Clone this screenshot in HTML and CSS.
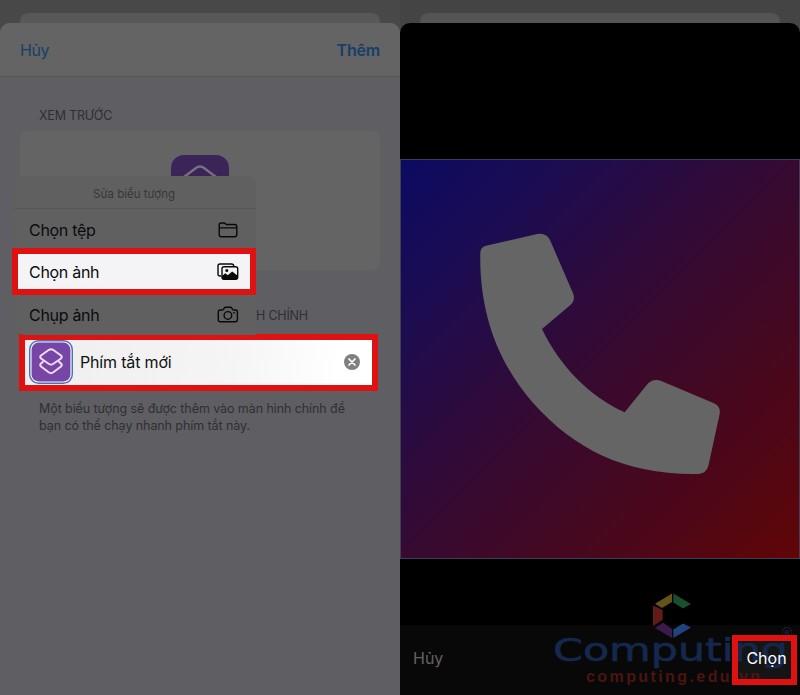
FILE: index.html
```html
<!DOCTYPE html>
<html lang="vi">
<head>
<meta charset="utf-8">
<title>Phím tắt mới</title>
<link rel="stylesheet" href="styles.css">
</head>
<body>
<main class="screens">
  <section class="phone">
    <div class="back-sheet"></div>
    <div class="sheet">
      <header class="bar"><span class="t-cancel">Hủy</span><b class="t-add">Thêm</b></header>
      <h2 class="label">XEM TRƯỚC</h2>
      <div class="preview">
        <svg class="app-icon" width="58" height="58" viewBox="0 0 58 58"><rect width="58" height="58" rx="13" fill="#3a2458"/><path d="M13 22L25 13Q29 10 33 13L45 22L33 31Q29 34 25 31Z" fill="none" stroke="#77717d" stroke-width="2.4" stroke-linejoin="round"/></svg>
      </div>
      <h2 class="label label-home"><span>H CHÍNH</span></h2>
      <div class="name-row">
        <svg class="shortcut" width="44" height="44" viewBox="0 0 44 44"><rect x=".7" y=".7" width="42.6" height="42.6" rx="9" fill="#f4f4f8" stroke="#4b72b8" stroke-width="1.4"/><rect x="2.600" y="2.600" width="38.800" height="38.800" rx="7" fill="#7645a6"/><g fill="none" stroke="#efdcf5" stroke-width="2" stroke-linejoin="round"><path d="M12 15.5L20 9.8Q22 8.500 24 9.800L32 15.500Q33.500 17 32 18.500L24 24Q22 25.300 20 24L12 18.500Q10.500 17 12 15.500Z"/><path d="M14.500 21.200L12 23.500Q10.500 25 12 26.500L20 32.500Q22 33.800 24 32.500L32 26.500Q33.500 25 32 23.500L29.500 21.200"/></g></svg>
        <span class="t-name">Phím tắt mới</span>
        <svg class="clear" width="16" height="16" viewBox="0 0 16 16"><circle cx="8" cy="8" r="8" fill="#808083"/><path d="M5 5L11 11M11 5L5 11" stroke="#fff" stroke-width="1.7" stroke-linecap="round"/></svg>
      </div>
      <p class="note"><span class="n1">Một biểu tượng sẽ được thêm vào màn hình chính để</span><br><span class="n2">bạn có thể chạy nhanh phím tắt này.</span></p>
    </div>
    <div class="menu">
      <div class="menu-title"><span>Sửa biểu tượng</span></div>
      <div class="item"><span>Chọn tệp</span>
        <svg width="22" height="20" viewBox="0 0 22 20"><path d="M2.200 14.500V5Q2.200 3 4.200 3H7.500L9.300 4.500H17.500Q19.800 4.500 19.800 6.700V14.500Q19.800 16.800 17.500 16.800H4.500Q2.200 16.800 2.200 14.500ZM2.200 7.900H19.800" fill="none" stroke="#080808" stroke-width="1.400" stroke-linejoin="round"/></svg></div>
      <div class="item picked"><span>Chọn ảnh</span>
        <svg width="22" height="20" viewBox="0 0 22 20"><path d="M4.200 14H3Q1 14 1 12V4Q1 2 3 2H14.500Q16.700 2 16.700 4" fill="none" stroke="#080808" stroke-width="1.400"/><rect x="5" y="4.700" width="15.700" height="12.600" rx="2" fill="#f3f3f5" stroke="#080808" stroke-width="1.400"/><circle cx="9.800" cy="8.600" r="1.500" fill="#080808"/><path d="M5 14L8.300 11.300L10.800 13.300L15.200 9.500L20.700 13.700V16Q20.700 17.300 19 17.300H7Q5 17.300 5 15.500Z" fill="#080808"/></svg></div>
      <div class="item last"><span>Chụp ảnh</span>
        <svg width="22" height="20" viewBox="0 0 22 20"><path d="M3 5H5.300Q6.200 5 6.700 4L7.300 3Q7.800 2.300 8.700 2.300H13.300Q14.200 2.300 14.700 3L15.300 4Q15.800 5 16.700 5H18.500Q20.400 5 20.400 7V14.500Q20.400 16.700 18.300 16.700H3.300Q1.300 16.700 1.300 14.700V7Q1.300 5 3 5Z" fill="none" stroke="#080808" stroke-width="1.400"/><circle cx="10.900" cy="10.400" r="3.800" fill="none" stroke="#080808" stroke-width="1.400"/><circle cx="17" cy="7.800" r=".9" fill="#080808"/></svg></div>
    </div>
  </section>
  <section class="phone right">
    <div class="back-sheet"></div>
    <div class="sheet viewer">
      <svg class="photo" width="400" height="400" viewBox="0 0 400 400"><defs><linearGradient id="g" x1="0" y1="0" x2="1" y2="1"><stop offset="0" stop-color="#0b0b62"/><stop offset=".22" stop-color="#1d0c50"/><stop offset=".5" stop-color="#360a31"/><stop offset=".78" stop-color="#4c0719"/><stop offset="1" stop-color="#600505"/></linearGradient></defs><rect x=".5" y=".5" width="399" height="399" fill="url(#g)" stroke="#403d58"/><path transform="translate(60 61) scale(.33333)" fill="#656565" d="M61 98Q61 82 78 77L232 42Q258 37 270 60L340 222Q346 242 332 254L246 327C300 440 390 530 494 577L560 495Q577 474 602 482L762 550Q783 560 779 582L745 738Q739 760 715 762C500 766 345 690 220 550C110 425 57 270 61 98Z"/></svg>
      <footer class="actions"><span class="t-cancel2">Hủy</span><span class="choose"><span>Chọn</span></span></footer>
    </div>
    <svg class="mark" width="250" height="100" viewBox="550 590 250 100">
      <path d="M672 593.500V602L662 608L655 603.700Z" fill="#65531a"/><path d="M673.300 593.500L691 604L683 608.500L673.300 602.500Z" fill="#17502b"/><path d="M653 605.500L662.700 610V620L653 626Z" fill="#621c18"/><path d="M655 628L663 622.500L672 629V638Z" fill="#3b1b4a"/><path d="M673.300 638V629.500L683 623.500L691 627.500Z" fill="#21437f"/>
      <text class="brand" x="553" y="661" textLength="235" lengthAdjust="spacingAndGlyphs">Computing</text>
      <text class="url" x="586" y="682" textLength="174">computing.edu.vn</text>
      <text class="reg" x="780" y="638">®</text>
    </svg>
  </section>
</main>
</body>
</html>
```
FILE: styles.css
```css
* { box-sizing: border-box; }
body { margin: 0; font-family: Inter, "Liberation Sans", sans-serif; background: #000; }
.screens { display: flex; width: 800px; height: 695px; overflow: hidden; }
.phone { position: relative; display: flex; flex-direction: column; width: 400px; height: 695px; padding-top: 13px; background: #484848; }
.right { background: #444; }
.back-sheet { height: 10px; margin: 0 20px; border-radius: 8px 8px 0 0; background: #585858; }
.right .back-sheet { background: #545454; }
.sheet { flex: 1; display: flex; flex-direction: column; border-radius: 10px 10px 0 0; background: #5f5e63; overflow: hidden; }
.bar { display: flex; justify-content: space-between; align-items: center; height: 54px; padding: 0 20px; background: #646464; border-bottom: 1px solid #555557; color: #173e68; font-size: 16px; }
.t-cancel { letter-spacing: -.4px; }
.t-add { font-weight: 600; letter-spacing: -.2px; }
.label { margin: 30px 39px 0; height: 23px; line-height: 17px; font-size: 12.500px; font-weight: 400; color: #2f2f33; letter-spacing: -.2px; }
.preview { height: 139px; margin: 1px 20px 0; padding-top: 24px; border-radius: 8px; background: #646465; text-align: center; }
.app-icon { display: inline-block; }
.label-home { margin: 37px 0 0 256px; height: 27px; }
.name-row { display: flex; align-items: center; width: 359px; height: 57px; margin-left: 19px; padding: 0 12px 1px 4px; border: 6px solid #df1111; background: linear-gradient(100deg, #eeeeef, #f5f5f5 60%, #fff 90%); }
.shortcut { flex: none; }
.t-name { flex: 1; margin-left: 7px; font-size: 16px; letter-spacing: -.17px; color: #111; }
.note { margin: 9px 39px; font-size: 12.500px; line-height: 17px; letter-spacing: -.08px; color: #2f2f33; white-space: nowrap; }
.menu { position: absolute; left: 14px; top: 176px; width: 242px; height: 159px; border-radius: 10px 10px 0 10px; background: #606061; }
.menu-title { height: 33px; padding-top: 11px; border-bottom: 1px solid #57575a; font-size: 11.500px; line-height: 15px; text-align: center; color: #373739; }
.menu-title span { margin-left: -2px; }
.item { display: flex; align-items: center; justify-content: space-between; height: 40px; padding: 1px 17px 0 15px; font-size: 16px; letter-spacing: -.3px; color: #0b0b0b; }
.picked { height: 47px; margin: -1px 0 0 -2px; padding: 0 11px; border: 6px solid #df1111; background: #f4f4f6; }
.last { height: 39px; padding-top: 0; }
.viewer { background: #000; padding-top: 136px; }
.photo { display: block; flex: none; }
.actions { display: flex; justify-content: space-between; align-items: center; height: 70px; margin-top: 66px; padding: 0 3px 0 13px; background: #080808; color: #626262; font-size: 16px; }
.t-cancel2 { padding-bottom: 4px; }
.choose { position: relative; display: flex; align-items: center; justify-content: center; width: 65px; height: 50px; padding: 0 0 4px 4px; color: #fff; background: #151516; }
.choose::after { content: ""; position: absolute; inset: 0; z-index: 2; border: 6px solid #df1111; }
.choose > span { position: relative; z-index: 3; letter-spacing: 0; }
.mark { position: absolute; left: 150px; top: 590px; z-index: 1; }
.brand { font: 32px "DejaVu Sans", sans-serif; fill: #14284e; stroke: #14284e; stroke-width: .6px; }
.url { font: bold 16px "Liberation Sans", sans-serif; fill: #4a1512; }
.reg { font: 14px "DejaVu Sans", sans-serif; fill: #14284e; }
```
